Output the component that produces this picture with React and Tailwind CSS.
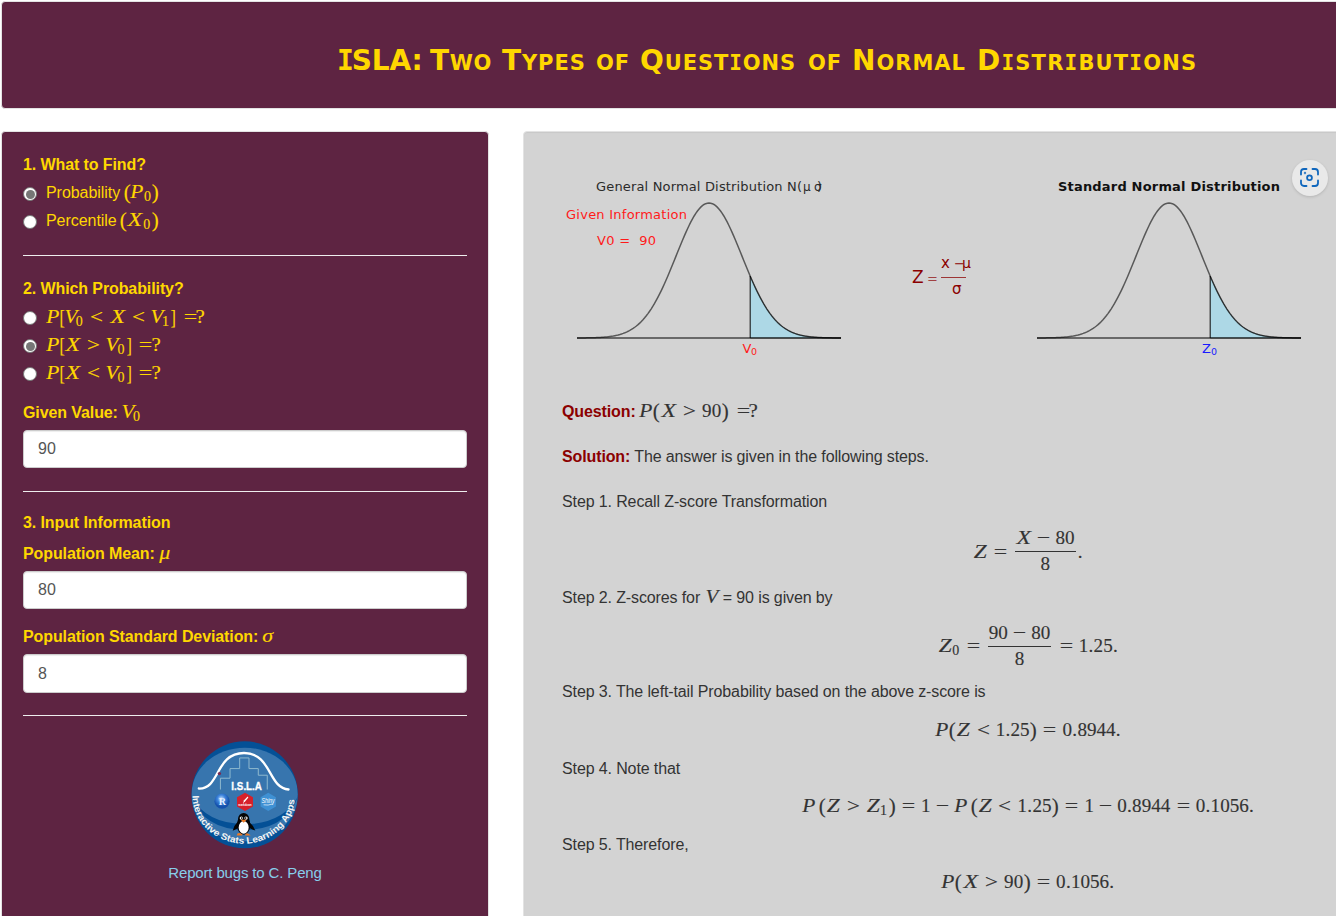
const MATH_FONT = "font-['Liberation_Serif','Times_New_Roman',serif]";

// width in em, horizontal stretch, italic, alternate character
const GLYPHS = {
  P: [0.7, 1.12, true], X: [0.852, 1.25, true], Z: [0.75, 1.22, true], V: [0.769, 1.1, true], v: [0.583, 1.1, true, 'V'],
  '(': [0.389, 1.1], ')': [0.389, 1.1], '[': [0.278, 0.85], ']': [0.278, 0.85],
  '<': [1.334, 1.2], '>': [1.334, 1.2], '=': [1.334, 1.25], '~': [1.06, 1.25, false, '='],
  '-': [1.222, 1.25, false, '−'], '.': [0.278, 1], '?': [0.5, 1.1], ' ': [0.17, 1],
  'μ': [0.603, 1.15, true], 'σ': [0.571, 1.15, true],
};

function M({ t }) {
  const out = [];
  for (let i = 0; i < t.length; i++) {
    let c = t[i];
    const sub = c === '_';
    if (sub) c = t[++i];
    const [w, s, italic, ch] = GLYPHS[c] || [0.5, 1];
    const tall = '()[]'.includes(c) ? 1.14 : 1;
    out.push(
      <span
        key={i}
        className={`inline-block whitespace-pre ${c === '~' ? 'text-right' : 'text-center'} ${italic ? 'italic' : ''} ${sub ? 'mr-px align-[-3px] text-[14px] leading-[0]' : ''}`}
        style={{ width: `${w}em` }}
      >
        <span className="inline-block" style={{ transform: `scale(${s}, ${tall})` }}>{ch || c}</span>
      </span>
    );
  }
  return <span className={`inline-block whitespace-nowrap text-[19.100px] font-normal leading-none tracking-normal [-webkit-text-stroke:0.15px_currentColor] ${MATH_FONT}`}>{out}</span>;
}

function Radio({ on, children }) {
  return (
    <div className="flex h-[28px] items-center gap-[9px]">
      <span className="mt-[2px] flex size-[14px] shrink-0 items-center justify-center rounded-full border border-[#767676] bg-white">
        {on && <span className="size-[9px] rounded-full bg-[#767676]" />}
      </span>
      <span className="flex items-baseline gap-[3px] whitespace-nowrap">{children}</span>
    </div>
  );
}

const Label = ({ children }) => (
  <div className="flex h-[24px] items-baseline gap-[4px] whitespace-nowrap font-bold leading-[26px] tracking-[-0.1px]">{children}</div>
);

const Field = ({ value, className = 'h-[38px]' }) => (
  <div className={`flex items-center rounded-[4px] border border-[#ccc] bg-white pl-[14px] text-[#555] shadow-[inset_0_1px_1px_rgba(0,0,0,0.075)] ${className}`}>{value}</div>
);

const Rule = () => <div className="h-px bg-[#eee]" />;

function bell(cx, from, to) {
  const pts = [];
  for (let z = from; z <= to + 0.001; z += 0.05) {
    pts.push(`${(cx + 33 * z).toFixed(2)},${(338 - 135 * Math.exp((-z * z) / 2)).toFixed(2)}`);
  }
  return pts.join(' L');
}

function Curve({ cx }) {
  return (
    <g fill="none" stroke="#000">
      <path d={`M${cx + 41.25},338 L${bell(cx, 1.25, 4)} L${cx + 132},338 Z`} fill="#add8e6" strokeWidth="1" strokeOpacity=".55" />
      <path d={`M${bell(cx, -4, 4)}`} strokeWidth="1.5" strokeOpacity=".58" />
      <path d={`M${cx - 132},338 H${cx + 132}`} strokeWidth="2" strokeOpacity=".5" />
      <path d={`M${cx + 41.25},276 V338`} strokeWidth="1.5" strokeOpacity=".4" />
    </g>
  );
}

function Charts() {
  return (
    <svg viewBox="562 152 774 220" className="block h-[220px] w-[774px] font-['DejaVu_Sans',sans-serif] text-[13px]">
      <Curve cx={709} />
      <Curve cx={1169} />
      <text x="596" y="191" textLength="206" fill="#2b2b2b">General Normal Distribution N(</text>
      <text x="803" y="191" fontSize="12" fill="#2b2b2b">μ</text>
      <text x="814" y="191" fontSize="12" fill="#2b2b2b">σ</text>
      <text x="817" y="191" fill="#2b2b2b">)</text>
      <text x="566" y="219" textLength="121" fill="#ff1a1a">Given Information</text>
      <text x="597" y="245" textLength="59" fill="#ff1a1a" xmlSpace="preserve">V0 =  90</text>
      <text x="742.5" y="352.5" fill="#ff1a1a">V</text>
      <text x="751" y="355" fontSize="9.5" fill="#ff1a1a">0</text>
      <text x="1058" y="191" textLength="222" fontWeight="bold" fill="#111">Standard Normal Distribution</text>
      <text x="1202" y="352.5" fill="#1a1aff">Z</text>
      <text x="1211" y="355" fontSize="9.5" fill="#1a1aff">0</text>
      <g fill="#8b0000" fontSize="17">
        <text x="912" y="283">Z</text>
        <text x="927" y="283" fontSize="13" fillOpacity=".7">=</text>
        <text x="941" y="268" fontSize="15">x</text>
        <text x="954" y="268" fontSize="13">−</text>
        <text x="962" y="268" fontSize="14">μ</text>
        <text x="952" y="294" fontSize="15">σ</text>
        <path d="M941,277.5 H966" stroke="#8b0000" strokeOpacity=".75" />
      </g>
    </svg>
  );
}

function Logo() {
  return (
    <svg viewBox="63 32 324 325" className="h-[108px] w-[108px]">
      <defs>
        <clipPath id="disc"><ellipse cx="224" cy="194" rx="160" ry="161" /></clipPath>
        <path id="arc" d="M67,196 A153,144 0 0 0 375,196" />
        <radialGradient id="ball" cx=".45" cy=".35"><stop offset="0" stopColor="#cfe4ff" /><stop offset=".5" stopColor="#3f86dc" /><stop offset="1" stopColor="#1552ad" /></radialGradient>
      </defs>
      <g clipPath="url(#disc)">
        <rect x="60" y="30" width="330" height="330" fill="#045096" />
        <ellipse cx="224" cy="193" rx="160" ry="141" fill="#3775ae" />
        <path d="M64,200 Q110,282 224,282 Q338,282 384,200 Q350,298 224,300 Q100,298 64,200" fill="#045096" />
      </g>
      <path d="M151,178 V144 H180 V115 H209 V83 H237 V115 H265 V135 H292 V178" fill="none" stroke="#8fb9cf" strokeWidth="3" />
      <path d="M86,175 C150,178 135,68 222,68 C305,68 295,174 356,178" fill="none" stroke="#fff" strokeWidth="7" strokeLinecap="round" />
      <circle cx="148" cy="130" r="5" fill="#7a2850" />
      <text x="184" y="179" textLength="92" lengthAdjust="spacingAndGlyphs" fontSize="34" fontWeight="bold" fill="#fff" stroke="#fff" strokeWidth="1">I.S.L.A</text>
      <circle cx="156" cy="213" r="23" fill="url(#ball)" />
      <text x="146" y="224" fontSize="30" fontWeight="bold" fill="#e6f1ff" fontFamily="Liberation Serif">R</text>
      <path d="M225,188 l24,13 v28 l-24,14 l-24,-14 v-28z" fill="#d6202b" />
      <path d="M219,219 l3,-9 l11,-11 l2,3 l-9,11z" fill="#fff" />
      <text x="205" y="229" fontSize="8" fontWeight="bold" textLength="40" fill="#fff">markdown</text>
      <path d="M295,188 l23,13 v28 l-23,14 l-23,-14 v-28z" fill="#3f91d4" />
      <text x="275" y="218" fontSize="19" fontStyle="italic" textLength="39" lengthAdjust="spacingAndGlyphs" fill="#fff">Shiny</text>
      <path d="M281,224 q13,3 28,-3" stroke="#fff" strokeWidth="2" fill="none" />
      <path d="M203,275 Q191,287 188,302 Q203,298 209,288z M237,275 Q251,287 256,301 Q241,298 234,288z" fill="#050505" />
      <ellipse cx="221" cy="284" rx="20" ry="30" fill="#050505" />
      <ellipse cx="221" cy="267" rx="17" ry="18" fill="#050505" />
      <ellipse cx="221" cy="292" rx="15" ry="19" fill="#fff" />
      <circle cx="214" cy="264" r="5" fill="#fff" />
      <circle cx="228" cy="264" r="5" fill="#fff" />
      <circle cx="215" cy="264" r="2.5" fill="#000" />
      <circle cx="227" cy="264" r="2.5" fill="#000" />
      <path d="M212,269 H230 L221,278z" fill="#ef7920" />
      <path d="M200,316 q3,-13 17,-3 v3z M225,316 q3,-13 17,0z" fill="#ef7920" />
      <text fontSize="28" fontWeight="bold" fill="#f4f4f4"><textPath href="#arc" textLength="457" lengthAdjust="spacingAndGlyphs">Interactive Stats Learning Apps</textPath></text>
    </svg>
  );
}

const Step = ({ children }) => (
  <div className="flex h-[24px] items-baseline gap-[4px] whitespace-nowrap leading-[26px] tracking-[-0.12px]">{children}</div>
);

const Eq = ({ children }) => <div className="flex h-[22px] items-center justify-center">{children}</div>;

const Frac = ({ top, bottom }) => (
  <span className="flex flex-col items-center px-[2px]">
    <span className="flex h-[25px] items-center px-px pb-px"><M t={top} /></span>
    <span className="h-px w-full bg-[#333]" />
    <span className="flex h-[25px] items-center pb-px"><M t={bottom} /></span>
  </span>
);

const SlabI = ({ children, className }) => <span className={`font-['DejaVu_Sans_Mono',monospace] ${className || ''}`}>{children}</span>;

function Title() {
  return (
    <h1 className="flex items-baseline whitespace-nowrap font-['DejaVu_Sans',sans-serif] text-[28px] font-bold text-[#ffd700] [font-variant:small-caps]">
      <span className="w-[93px] tracking-[-0.2px]"><SlabI className="tracking-[-2px]">I</SlabI>SLA:</span>
      <span className="w-[72px] tracking-[0.6px]">T<span className="text-[30px]">wo</span></span>
      <span className="w-[94px] tracking-[0.9px]">T<span className="text-[30px]">ypes</span></span>
      <span className="w-[44px] text-[30px] tracking-[1px]">of</span>
      <span className="w-[168px] tracking-[0.9px]">Q<span className="text-[30px]">uest<SlabI>i</SlabI>ons</span></span>
      <span className="w-[44px] text-[30px] tracking-[1px]">of</span>
      <span className="w-[125px] tracking-[1px]">N<span className="text-[30px]">ormal</span></span>
      <span className="w-[220px] tracking-[1.2px]">D<span className="text-[30px]"><SlabI>i</SlabI>str<SlabI>i</SlabI>but<SlabI>i</SlabI>ons</span></span>
    </h1>
  );
}

export default function App() {
  return (
    <div className="flex h-[916px] w-[1336px] flex-col gap-[22px] overflow-hidden bg-white pl-px pt-px font-['Liberation_Sans',Arial,sans-serif] text-[16px] leading-[24px] text-[#333]">
      <header className="flex h-[108px] w-[1532px] shrink-0 items-center justify-center rounded-[4px] border border-[#e3e3e3] bg-[#5e2442] pt-[10px] shadow-[inset_0_1px_1px_rgba(0,0,0,0.05)]">
        <Title />
      </header>

      <div className="flex w-[1532px] gap-[34px]">
        <aside className="flex h-[800px] w-[488px] shrink-0 flex-col rounded-[4px] border border-[#e3e3e3] bg-[#5e2442] px-[21px] pt-[20px] text-[#ffd700] shadow-[inset_0_1px_1px_rgba(0,0,0,0.05)]">
          <section className="flex flex-col gap-[3px] pb-[20px]">
            <Label>1. What to Find?</Label>
            <div className="tracking-[-0.05px]">
              <Radio on>Probability <M t="(P_0)" /></Radio>
              <Radio>Percentile <M t="(X_0)" /></Radio>
            </div>
          </section>
          <Rule />
          <section className="flex flex-col gap-[3px] pt-[20px]">
            <Label>2. Which Probability?</Label>
            <div>
              <Radio><M t="P[v_0<X<v_1]~?" /></Radio>
              <Radio on><M t="P[X>v_0]~?" /></Radio>
              <Radio><M t="P[X<v_0]~?" /></Radio>
            </div>
          </section>
          <section className="flex flex-col gap-[6px] pb-[23px] pt-[13px]">
            <Label>Given Value: <M t="v_0" /></Label>
            <Field value="90" />
          </section>
          <Rule />
          <section className="flex flex-col gap-[6px] pb-[22px] pt-[18px]">
            <Label>3. Input Information</Label>
            <div className="flex flex-col gap-[15px] pt-px">
              <div className="flex flex-col gap-[6px]">
                <Label>Population Mean: <M t="μ" /></Label>
                <Field value="80" />
              </div>
              <div className="flex flex-col gap-[6px]">
                <Label>Population Standard Deviation: <M t="σ" /></Label>
                <Field value="8" className="h-[39px]" />
              </div>
            </div>
          </section>
          <Rule />
          <footer className="flex flex-col items-center gap-[12px] pt-[25px]">
            <Logo />
            <a className="text-[15px] tracking-[-0.15px] text-[#87ceeb]">Report bugs to C. Peng</a>
          </footer>
        </aside>

        <main className="flex h-[800px] w-[1010px] shrink-0 flex-col gap-[27px] rounded-[4px] border border-[#e3e3e3] bg-[#d3d3d3] pl-[38px] pr-[38px] pt-[20px] shadow-[inset_0_1px_1px_rgba(0,0,0,0.05)]">
          <div className="relative">
            <Charts />
            <button className="absolute left-[730px] top-[8px] flex size-[36px] items-center justify-center rounded-full bg-[#e9e9e9] shadow-[0_1px_3px_rgba(0,0,0,0.15)]">
              <svg viewBox="0 0 20 20" className="size-[20px]" fill="none" stroke="#1067bd" strokeWidth="1.8" strokeLinecap="round">
                <path d="M1,6.500 V4 a3,3 0 0 1 3,-3 H6.500 M12.500,1 h2.500 a3,3 0 0 1 3,3 V6.500 M18,12.500 v2.500 a3,3 0 0 1 -3,3 H12.500 M6.500,18 H4 a3,3 0 0 1 -3,-3 V12.500" />
                <circle cx="9.5" cy="9.7" r="2.400" />
                <circle cx="5" cy="5" r=".3" />
              </svg>
            </button>
          </div>
          <div className="flex flex-col gap-[16px]">
            <div className="flex flex-col gap-[13px]">
              <div className="flex flex-col gap-[21px]">
                <Step><b className="text-[#8b0000]">Question:</b> <M t="P(X>90)~?" /></Step>
                <Step><b className="text-[#8b0000]">Solution:</b> <span>The answer is given in the following steps.</span></Step>
                <Step>Step 1. Recall Z-score Transformation</Step>
              </div>
              <div className="flex flex-col gap-[8px]">
                <div className="flex h-[51px] items-center justify-center"><M t="Z=" /><Frac top="X-80" bottom="8" /><M t="." /></div>
                <div className="flex flex-col gap-[12px]">
                  <Step>Step 2. Z-scores for <M t="V" /> <span>= 90 is given by</span></Step>
                  <div className="flex h-[50px] items-center justify-center"><M t="Z_0=" /><Frac top="90-80" bottom="8" /><M t="=1.25." /></div>
                </div>
                <Step>Step 3. The left-tail Probability based on the above z-score is</Step>
              </div>
            </div>
            <div className="flex flex-col gap-[15px]">
              <Eq><M t="P(Z<1.25)=0.8944." /></Eq>
              <Step>Step 4. Note that</Step>
              <Eq><M t="P (Z>Z_1)=1-P (Z<1.25)=1-0.8944=0.1056." /></Eq>
              <Step>Step 5. Therefore,</Step>
              <Eq><M t="P(X>90)=0.1056." /></Eq>
            </div>
          </div>
        </main>
      </div>
    </div>
  );
}
